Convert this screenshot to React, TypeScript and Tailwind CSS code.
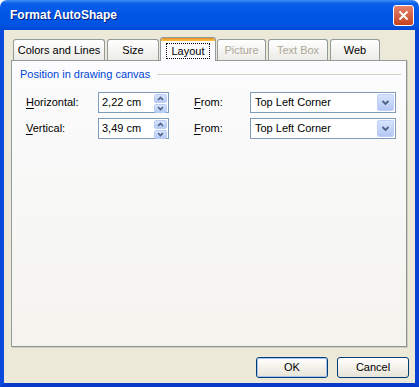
import React from "react";

const font = { fontFamily: '"Liberation Sans", Arial, sans-serif' };

function Tab({ label, active, disabled, w, ml }: { label: string; active?: boolean; disabled?: boolean; w: string; ml: string }) {
    if (active) {
        return (
            <div className={`relative z-10 ${w} ${ml} mb-[-1px] h-[24px] flex items-center justify-center rounded-t-[3px] border border-b-0 border-[#919B9C] bg-[#FCFCFE] overflow-hidden`}>
                <div className="absolute left-0 right-0 top-0 h-[3px] bg-gradient-to-b from-[#E68B2C] to-[#FFC73C]" />
                <span className="mt-[3px] px-[4px] leading-[14px] border border-dotted border-black text-black">{label}</span>
            </div>
        );
    }
    return (
        <div className={`${w} ${ml} h-[21px] flex items-center justify-center rounded-t-[3px] border border-b-0 border-[#919B9C] bg-gradient-to-b from-white to-[#ECEBE6]`}>
            <span className={disabled ? "text-[#ACA899]" : "text-black"}>{label}</span>
        </div>
    );
}

function Spinner() {
    return (
        <div className="w-[15px] h-full flex flex-col gap-[1px] p-[1px]">
            {["M2 5 L4.5 2.5 L7 5", "M2 2 L4.5 4.5 L7 2"].map((d, i) => (
                <div key={i} className="flex-1 flex items-center justify-center rounded-[2px] bg-gradient-to-b from-[#D8E4FC] to-[#B6CAF7] border border-[#B8CCF6]">
                    <svg width="9" height="7" viewBox="0 0 9 7">
                        <path d={d} stroke="#4D6185" strokeWidth="1.6" fill="none" />
                    </svg>
                </div>
            ))}
        </div>
    );
}

function Row({ label, mn, value }: { label: string; mn: string; value: string }) {
    return (
        <div className="h-[21px] flex items-center">
            <div className="w-[73px] pl-[1px]">
                <span className="underline underline-offset-2">{mn}</span>
                {label}
            </div>
            <div className="w-[71px] h-full flex items-center border border-[#7F9DB9] bg-white">
                <span className="flex-1 pl-[3px]">{value}</span>
                <Spinner />
            </div>
            <div className="w-[56px] pl-[24px] ml-[1px]">
                <span className="underline underline-offset-2">F</span>rom:
            </div>
            <div className="ml-[24px] w-[146px] h-full flex items-center border border-[#7F9DB9] bg-white">
                <span className="flex-1 pl-[4px]">Top Left Corner</span>
                <div className="w-[17px] h-[17px] mr-[1px] flex items-center justify-center rounded-[2px] bg-gradient-to-b from-[#D8E4FC] to-[#B4C8F6] border border-[#BFD0F8]">
                    <svg width="9" height="7" viewBox="0 0 9 7">
                        <path d="M1.5 2 L4.5 5 L7.5 2" stroke="#4D6185" strokeWidth="1.8" fill="none" />
                    </svg>
                </div>
            </div>
        </div>
    );
}

function Button({ label, def }: { label: string; def?: boolean }) {
    return (
        <div className="w-[72px] h-[21px] rounded-[3px] border border-[#003C74] bg-gradient-to-b from-white to-[#E6E3D6] flex items-center justify-center">
            <div className={`w-full h-full rounded-[2px] flex items-center justify-center ${def ? "border border-[#A7C2F2]" : ""}`}>
                {label}
            </div>
        </div>
    );
}

export default function App() {
    return (
        <div className="w-[419px] h-[387px] bg-white text-[11px] text-black" style={font}>
            <div className="w-full h-full flex flex-col rounded-t-[7px] overflow-hidden">
                {/* Title bar */}
                <div className="h-[30px] flex items-center justify-between pl-[10px] pr-[5px] bg-[linear-gradient(to_bottom,#3C8FF6_0%,#0A5FEA_12%,#0055E5_45%,#0054E3_80%,#0048D6_100%)]">
                    <span className="text-white font-bold text-[12px] [text-shadow:1px_1px_0_#0A1E7A]">Format AutoShape</span>
                    <div className="w-[21px] h-[21px] rounded-[3px] border border-white bg-gradient-to-b from-[#E7806A] to-[#C3431C] flex items-center justify-center">
                        <svg width="11" height="11" viewBox="0 0 11 11">
                            <path d="M1.5 1.5 L9.5 9.5 M9.5 1.5 L1.5 9.5" stroke="white" strokeWidth="2" />
                        </svg>
                    </div>
                </div>

                {/* Body */}
                <div className="flex-1 flex flex-col bg-[#ECE9D8] border-l-4 border-r-4 border-b-4 border-l-[#0A4BDD] border-r-[#0842D2] border-b-[#0839C8]">
                    {/* Tabs */}
                    <div className="ml-[9px] mt-[7px] h-[23px] flex items-end">
                        <Tab label="Colors and Lines" w="w-[92px]" ml="ml-0" />
                        <Tab label="Size" w="w-[52px]" ml="ml-[2px]" />
                        <Tab label="Layout" w="w-[56px]" ml="ml-[1px]" active />
                        <Tab label="Picture" w="w-[49px]" ml="ml-[1px]" disabled />
                        <Tab label="Text Box" w="w-[60px]" ml="ml-[2px]" disabled />
                        <Tab label="Web" w="w-[50px]" ml="ml-[2px]" />
                    </div>

                    {/* Panel */}
                    <div className="ml-[7px] w-[396px] h-[287px] border border-[#919B9C] bg-gradient-to-b from-[#FCFCFE] to-[#F4F3EE] border-r-[#8E9495] border-b-[#8E9495] shadow-[1px_1px_0_#D0CEBF]">
                        <div className="pl-[8px] pr-[5px] pt-[6px] flex items-center">
                            <span className="shrink-0 whitespace-nowrap text-[#0046D5] leading-[14px]">Position in drawing canvas</span>
                            <div className="ml-[7px] flex-1 h-px bg-[#D0D0BF]" />
                        </div>
                        <div className="pl-[13px] mt-[11px] flex flex-col gap-[5px]">
                            <Row mn="H" label="orizontal:" value="2,22 cm" />
                            <Row mn="V" label="ertical:" value="3,49 cm" />
                        </div>
                    </div>

                    {/* Buttons */}
                    <div className="mt-[10px] flex justify-end gap-[9px] pr-[6px]">
                        <Button label="OK" def />
                        <Button label="Cancel" />
                    </div>
                </div>
            </div>
        </div>
    );
}
